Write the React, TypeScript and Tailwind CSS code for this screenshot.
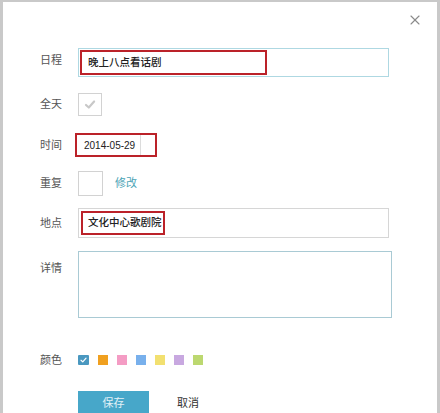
import { X } from "lucide-react";

const swatches = ["#f0a020", "#f49cc4", "#78b0ec", "#f2e070", "#c8a8e0", "#bcd870"];

const font = "font-['Liberation_Sans','Noto_Sans_CJK_SC',sans-serif]";

function Label({ children, className = "" }: { children: React.ReactNode; className?: string }) {
    return <div className={`w-[38px] shrink-0 text-[11px] text-[#555] ${className}`}>{children}</div>;
}

function Tick({ color, width = 1.8 }: { color: string; width?: number }) {
    return (
        <svg viewBox="0 0 12 12" className="w-full h-full">
            <path d="M2.3 6.4 L4.9 8.8 L9.8 3.2" fill="none" stroke={color} strokeWidth={width} strokeLinecap="round" strokeLinejoin="round" />
        </svg>
    );
}

export default function App() {
    return (
        <div className={`relative w-[440px] h-[413px] bg-white border-l-[3px] border-r-[3px] border-t-2 border-[#c9c9c9] ${font} overflow-hidden`}>
            {/* close */}
            <button className="absolute top-[10px] right-[14px] text-[#8a8a8a]">
                <X size={16} strokeWidth={1.6} />
            </button>

            <div className="flex flex-col pl-[37px] pt-[46px]">
                {/* 日程 */}
                <div className="flex items-center">
                    <Label className="-mt-[4px]">日程</Label>
                    <div className="w-[311px] h-[29px] border border-[#aed8e2] p-px">
                        <div className="w-[187px] h-full border-2 border-[#bb2229] flex items-center pl-[6px] text-[10.5px] font-medium text-[#222]">
                            晚上八点看话剧
                        </div>
                    </div>
                </div>

                {/* 全天 */}
                <div className="flex items-center mt-[16px]">
                    <Label>全天</Label>
                    <div className="w-[24px] h-[23px] border border-[#d2d2d2] p-[4px]">
                        <Tick color="#c8c8c8" width={2} />
                    </div>
                </div>

                {/* 时间 */}
                <div className="flex items-center mt-[17px]">
                    <Label>时间</Label>
                    <div className="-ml-[3px] w-[82px] h-[24px] border-2 border-[#bb2229] flex items-center">
                        <div className="ml-[1px] flex-1 h-full flex items-center pl-[6px] text-[10px] font-medium text-[#222] border-r border-[#dcdcdc]">
                            2014-05-29
                        </div>
                        <div className="w-[14px]" />
                    </div>
                </div>

                {/* 重复 */}
                <div className="flex items-center mt-[14px]">
                    <Label>重复</Label>
                    <div className="w-[25px] h-[25px] border border-[#d2d2d2]" />
                    <span className="ml-[12px] text-[11px] text-[#4aa3b5]">修改</span>
                </div>

                {/* 地点 */}
                <div className="flex items-center mt-[12px]">
                    <Label>地点</Label>
                    <div className="w-[311px] h-[30px] border border-[#d6d6d6] pl-[2px] py-[2px]">
                        <div className="w-[84px] h-full border-2 border-[#bb2229] flex items-center pl-[5px] text-[10.5px] font-medium text-[#222]">
                            文化中心歌剧院
                        </div>
                    </div>
                </div>

                {/* 详情 */}
                <div className="flex items-start mt-[13px]">
                    <Label className="pt-[9px]">详情</Label>
                    <div className="w-[314px] h-[67px] border border-[#a9cad4]" />
                </div>

                {/* 颜色 */}
                <div className="flex items-center mt-[34px]">
                    <Label>颜色</Label>
                    <div className="flex items-center gap-[9px]">
                        <div className="w-[11px] h-[10px] bg-[#4a98c0] rounded-[1px] p-px">
                            <Tick color="#ffffff" />
                        </div>
                        {swatches.map((c) => (
                            <div key={c} className="w-[10px] h-[10px]" style={{ background: c }} />
                        ))}
                    </div>
                </div>

                {/* buttons */}
                <div className="flex items-center mt-[22px] pl-[38px]">
                    <button className="w-[71px] h-[25px] bg-[#47a7c9] text-white/85 text-[11px]">保存</button>
                    <span className="ml-[28px] text-[11px] text-[#333]">取消</span>
                </div>
            </div>
        </div>
    );
}
